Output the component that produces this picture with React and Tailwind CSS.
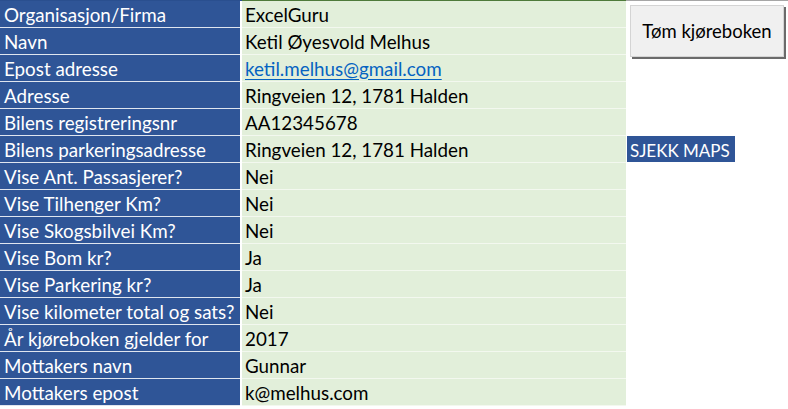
const rows = [
  ["Organisasjon/Firma", "ExcelGuru"],
  ["Navn", "Ketil Øyesvold Melhus"],
  ["Epost adresse", "ketil.melhus@gmail.com", "link"],
  ["Adresse", "Ringveien 12, 1781 Halden"],
  ["Bilens registreringsnr", "AA12345678"],
  ["Bilens parkeringsadresse", "Ringveien 12, 1781 Halden", "maps"],
  ["Vise Ant. Passasjerer?", "Nei"],
  ["Vise Tilhenger Km?", "Nei"],
  ["Vise Skogsbilvei Km?", "Nei"],
  ["Vise Bom kr?", "Ja"],
  ["Vise Parkering kr?", "Ja"],
  ["Vise kilometer total og sats?", "Nei"],
  ["År kjøreboken gjelder for", "2017"],
  ["Mottakers navn", "Gunnar"],
  ["Mottakers epost", "k@melhus.com"],
];

export default function App() {
  return (
    <div
      className="relative w-[788px] h-[409px] bg-white overflow-hidden text-[18.8px] leading-none"
      style={{ fontFamily: "Lato, 'Open Sans', sans-serif" }}
    >
      {/* top gridline */}
      <div className="flex h-[1px]">
        <div className="w-[242px] bg-[#2a4f8f]" />
        <div className="w-[384px] bg-[#4e7a3a]" />
        <div className="flex-1 bg-[#a6a6a6]" />
      </div>

      <div className="flex flex-col">
        {rows.map(([label, value, kind]) => (
          <div key={label} className="flex h-[27px]">
            <div className="w-[240px] bg-[#2f5597] text-white border-b border-[#dfe5ef] flex items-center pl-[4px] pt-[2px] whitespace-nowrap">
              {label}
            </div>
            <div className="w-[2px] bg-white" />
            <div className="w-[384px] bg-[#e2efda] border-b border-[#f3f8ef] flex items-center pl-[3px] pt-[2px] text-black whitespace-nowrap">
              {kind === "link" ? (
                <span className="text-[#0563c1] underline underline-offset-[3px]">{value}</span>
              ) : (
                value
              )}
            </div>
            <div className="flex-1 flex items-stretch pb-[1px]">
              {kind === "maps" && (
                <div className="w-[108px] ml-[1px] bg-[#2f5597] text-white flex items-center pl-[3px] pt-[2px] whitespace-nowrap text-[17px]">
                  SJEKK MAPS
                </div>
              )}
            </div>
          </div>
        ))}
      </div>

      {/* floating sheet button */}
      <button className="absolute left-[630px] top-[5px] w-[154px] h-[52px] bg-[#f0f0f0] border border-[#d4d4d4] shadow-[2px_2px_0_#6b6b6b] text-black text-[18.5px] flex items-center justify-center">
        Tøm kjøreboken
      </button>
    </div>
  );
}
